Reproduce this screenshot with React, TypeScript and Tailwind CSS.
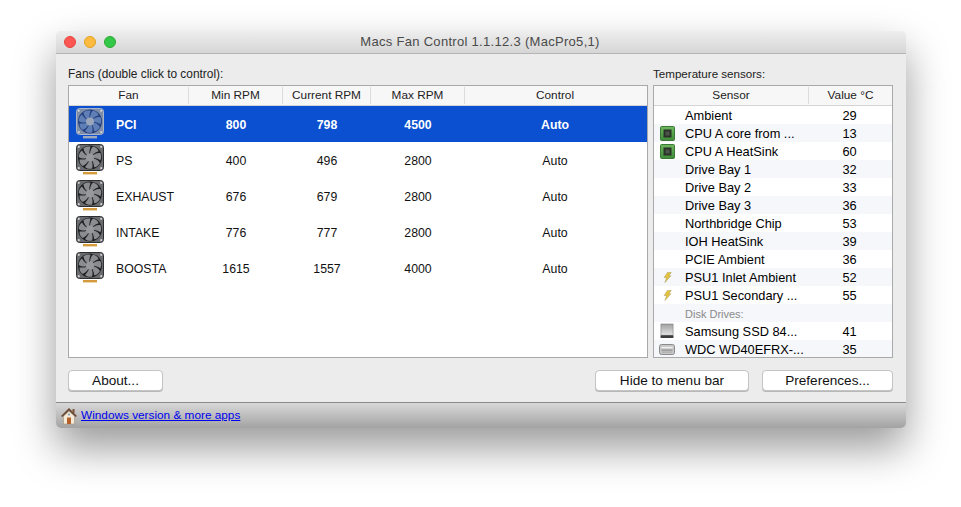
const fans = [
  { name: "PCI", min: 800, current: 798, max: 4500 },
  { name: "PS", min: 400, current: 496, max: 2800 },
  { name: "EXHAUST", min: 676, current: 679, max: 2800 },
  { name: "INTAKE", min: 776, current: 777, max: 2800 },
  { name: "BOOSTA", min: 1615, current: 1557, max: 4000 },
]

type SensorIcon = "chip" | "bolt" | "ssd" | "hdd" | null

const sensors: { name: string; value?: number; icon?: SensorIcon; group?: boolean }[] = [
  { name: "Ambient", value: 29 },
  { name: "CPU A core from ...", value: 13, icon: "chip" },
  { name: "CPU A HeatSink", value: 60, icon: "chip" },
  { name: "Drive Bay 1", value: 32 },
  { name: "Drive Bay 2", value: 33 },
  { name: "Drive Bay 3", value: 36 },
  { name: "Northbridge Chip", value: 53 },
  { name: "IOH HeatSink", value: 39 },
  { name: "PCIE Ambient", value: 36 },
  { name: "PSU1 Inlet Ambient", value: 52, icon: "bolt" },
  { name: "PSU1 Secondary ...", value: 55, icon: "bolt" },
  { name: "Disk Drives:", group: true },
  { name: "Samsung SSD 84...", value: 41, icon: "ssd" },
  { name: "WDC WD40EFRX-...", value: 35, icon: "hdd" },
]

function FanIcon({ selected }: { selected: boolean }) {
  const frame = selected ? "#7f8ea8" : "#6a6b6e"
  const edge = selected ? "#aab5c8" : "#2f2f31"
  const well = selected ? "#24407e" : "#1f2022"
  const blade = selected ? "#5f7fb6" : "#8b8c8f"
  const hub = selected ? "#9aa6ba" : "#98999c"
  const blades = [0, 51, 103, 154, 206, 257, 309]
  return (
    <svg width="28" height="34" viewBox="0 0 28 34" className="shrink-0">
      <rect x="0.5" y="0.5" width="27" height="26" rx="3" fill={frame} stroke={edge} />
      <circle cx="14" cy="13.5" r="12" fill={well} />
      {blades.map((a) => (
        <path
          key={a}
          d="M14 13.5 C13.5 9 14.5 5 17 2.6 C20 3.4 21.6 5 22.6 7.2 C19 8.4 16 10.5 14 13.5 Z"
          fill={blade}
          transform={`rotate(${a} 14 13.5)`}
        />
      ))}
      <circle cx="14" cy="13.5" r="4" fill={hub} />
      <circle cx="2.8" cy="2.8" r="1.1" fill="#cfd1d4" />
      <circle cx="25.2" cy="2.8" r="1.1" fill="#cfd1d4" />
      <circle cx="2.8" cy="24.2" r="1.1" fill="#cfd1d4" />
      <circle cx="25.2" cy="24.2" r="1.1" fill="#cfd1d4" />
      <rect x="7" y="28" width="14" height="2.4" fill={selected ? "#9fa9bb" : "#d49a3c"} />
    </svg>
  )
}

function RowIcon({ icon }: { icon?: SensorIcon }) {
  if (icon === "chip") {
    return (
      <svg width="15" height="15" viewBox="0 0 15 15">
        <defs>
          <linearGradient id="chip" x1="0" y1="0" x2="0" y2="1">
            <stop offset="0" stopColor="#6fb75f" />
            <stop offset="1" stopColor="#3f8a3a" />
          </linearGradient>
        </defs>
        <rect x="0.5" y="0.5" width="14" height="14" rx="1" fill="url(#chip)" stroke="#3a7a35" />
        <rect x="3.5" y="3.5" width="8" height="8" fill="#2b3329" />
        <rect x="5.5" y="5.5" width="4" height="4" fill="#4c544b" />
      </svg>
    )
  }
  if (icon === "bolt") {
    return (
      <svg width="9" height="11" viewBox="0 0 10 13">
        <path d="M5 0.5 L9.5 0.5 L6.5 4.5 L9 4.5 L2 12.5 L4 6.5 L1 6.5 Z" fill="#e6c53c" stroke="#a89a5a" strokeWidth="0.6" />
      </svg>
    )
  }
  if (icon === "ssd") {
    return (
      <svg width="14" height="16" viewBox="0 0 15 16">
        <defs>
          <linearGradient id="ssd" x1="0" y1="0" x2="0" y2="1">
            <stop offset="0" stopColor="#a0a0a0" />
            <stop offset="1" stopColor="#e4e4e4" />
          </linearGradient>
        </defs>
        <rect x="1" y="0.5" width="13" height="12" fill="url(#ssd)" stroke="#777" strokeWidth="0.6" />
        <rect x="0.5" y="12.5" width="14" height="3" rx="0.8" fill="#3d3d3d" />
      </svg>
    )
  }
  if (icon === "hdd") {
    return (
      <svg width="16" height="11" viewBox="0 0 16 11">
        <rect x="0.5" y="0.5" width="15" height="10" rx="2" fill="#c9c9c9" stroke="#8a8a8a" />
        <rect x="2.5" y="3" width="11" height="1.2" fill="#f2f2f2" />
        <rect x="2.5" y="5.5" width="11" height="1.2" fill="#8f8f8f" />
        <rect x="2.5" y="7.6" width="11" height="1" fill="#a5a5a5" />
      </svg>
    )
  }
  return null
}

function HouseIcon() {
  return (
    <svg width="18" height="18" viewBox="0 0 18 18" className="shrink-0">
      <path d="M9 1 L17 9 L15.5 10 L9 3.8 L2.5 10 L1 9 Z" fill="#6b4a36" />
      <rect x="12.5" y="2" width="2" height="4" fill="#7a5238" />
      <path d="M3.5 9.2 L9 4.4 L14.5 9.2 L14.5 17 L3.5 17 Z" fill="#f4ead8" stroke="#9a8468" strokeWidth="0.5" />
      <rect x="7" y="10.5" width="4" height="6.5" fill="#b4602a" />
      <circle cx="9" cy="7.6" r="1.1" fill="#8aa3b8" />
    </svg>
  )
}

function PushButton({ label, className }: { label: string; className: string }) {
  return (
    <button className={`h-[21px] rounded-[4px] border border-[#c4c4c4] bg-white text-[13.6px] leading-none text-[#111] shadow-[0_1px_0_#b8b8b8] ${className}`}>
      {label}
    </button>
  )
}

export default function App() {
  return (
    <div className="min-h-[507px] bg-white pl-[56px] pt-[31px] font-['Liberation_Sans',sans-serif]">
      <div className="flex h-[397px] w-[850px] flex-col overflow-hidden rounded-[5px] bg-[#ececec] shadow-[0_20px_42px_rgba(0,0,0,0.4)]">
        <div className="flex h-[23px] shrink-0 items-center border-b border-[#b5b5b5] bg-gradient-to-b from-[#eeeeee] to-[#d6d6d6] pl-[8px]">
          <div className="flex gap-[8px]">
            <span className="h-3 w-3 rounded-full border border-[#e2463f] bg-[#fc5753]" />
            <span className="h-3 w-3 rounded-full border border-[#e1a124] bg-[#fdbc40]" />
            <span className="h-3 w-3 rounded-full border border-[#2aa92e] bg-[#34c84a]" />
          </div>
          <div className="flex-1 pr-[62px] text-center text-[13px] tracking-[0.3px] text-[#4a4a4a]">
            Macs Fan Control 1.1.12.3 (MacPro5,1)
          </div>
        </div>

        <div className="flex flex-1 flex-col pl-[12px] pr-[13px]">
          <div className="flex gap-[5px] pt-[13px]">
            <div className="w-[580px]">
              <div className="mb-[4px] h-[14px] text-[11.9px] leading-[14px] text-[#222]">Fans (double click to control):</div>
              <div className="h-[273px] border border-[#a9a9a9] bg-white">
                <div className="flex h-[20px] items-center border-b border-[#d4d4d4] bg-[#f8f7f8] text-center text-[11.8px] text-[#222]">
                  <div className="w-[120px] border-r border-[#dcdcdc]">Fan</div>
                  <div className="w-[94px] border-r border-[#dcdcdc]">Min RPM</div>
                  <div className="w-[88px] border-r border-[#dcdcdc]">Current RPM</div>
                  <div className="w-[94px] border-r border-[#dcdcdc]">Max RPM</div>
                  <div className="flex-1 pr-[2px]">Control</div>
                </div>
                {fans.map((fan, i) => {
                  const selected = i === 0
                  return (
                    <div
                      key={fan.name}
                      className={`flex h-[36px] items-center pt-[2px] text-[12.3px] ${selected ? "bg-[#0b50d0] font-bold text-white" : "text-[#111]"}`}
                    >
                      <div className="flex w-[120px] items-center pl-[7px]">
                        <FanIcon selected={selected} />
                        <span className="pl-[12px]">{fan.name}</span>
                      </div>
                      <div className="w-[94px] text-center">{fan.min}</div>
                      <div className="w-[88px] text-center">{fan.current}</div>
                      <div className="w-[94px] text-center">{fan.max}</div>
                      <div className="flex-1 pr-[2px] text-center">Auto</div>
                    </div>
                  )
                })}
              </div>
            </div>

            <div className="w-[240px]">
              <div className="mb-[4px] h-[14px] text-[11.6px] leading-[14px] text-[#222]">Temperature sensors:</div>
              <div className="h-[273px] overflow-hidden border border-[#a9a9a9] bg-white">
                <div className="flex h-[20px] items-center border-b border-[#d4d4d4] bg-[#f8f7f8] text-center text-[11.8px] text-[#222]">
                  <div className="w-[155px] border-r border-[#dcdcdc]">Sensor</div>
                  <div className="flex-1">Value °C</div>
                </div>
                {sensors.map((s, i) => (
                  <div key={s.name} className={`flex h-[18px] shrink-0 items-center pt-[2px] text-[12.8px] ${i % 2 === 1 ? "bg-[#f5f7fb]" : "bg-white"}`}>
                    <div className="-mt-[2px] flex h-[16px] w-[31px] items-center justify-center pr-[5px]">
                      <RowIcon icon={s.icon} />
                    </div>
                    {s.group ? (
                      <div className="text-[11px] text-[#8a8a8a]">{s.name}</div>
                    ) : (
                      <>
                        <div className="w-[124px] whitespace-nowrap">{s.name}</div>
                        <div className="flex-1 pr-[2px] text-center">{s.value}</div>
                      </>
                    )}
                  </div>
                ))}
              </div>
            </div>
          </div>

          <div className="flex items-center pt-[12px]">
            <PushButton label="About..." className="w-[95px]" />
            <div className="flex-1" />
            <PushButton label="Hide to menu bar" className="w-[154px]" />
            <PushButton label="Preferences..." className="ml-[13px] w-[131px]" />
          </div>
        </div>

        <div className="flex h-[26px] shrink-0 items-center gap-[3px] border-t border-[#8a8a8a] bg-gradient-to-b from-[#d8d8d8] to-[#a3a3a3] pl-[4px]">
          <HouseIcon />
          <a href="#" className="text-[11.8px] text-[#0000ee] underline">Windows version &amp; more apps</a>
        </div>
      </div>
    </div>
  )
}
